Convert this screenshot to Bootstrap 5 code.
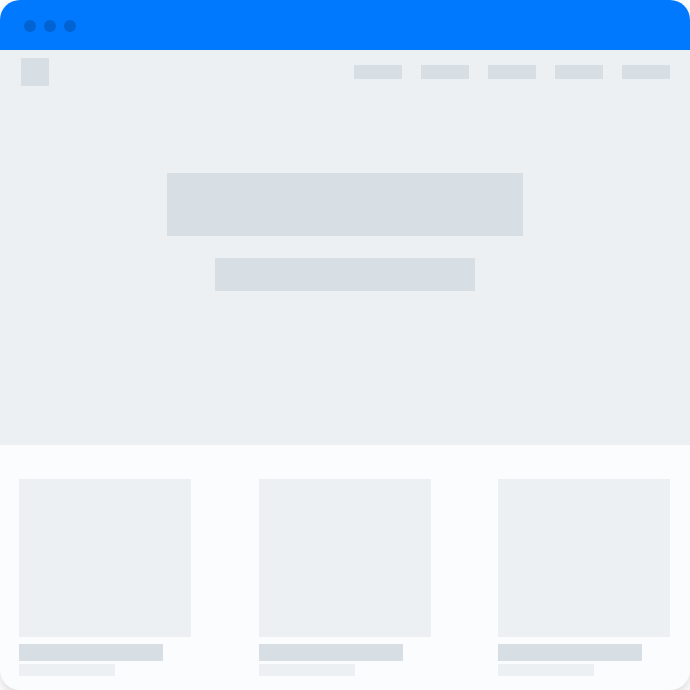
<!DOCTYPE html>
<html lang="en">
<head>
<meta charset="utf-8">
<meta name="viewport" content="width=device-width, initial-scale=1">
<title>Landing page wireframe</title>
<link rel="stylesheet" href="https://cdn.jsdelivr.net/npm/bootstrap@5.3.0/dist/css/bootstrap.min.css">
<style>
  :root { --wf-blue: #0079ff; --wf-dot: #0063d1; --wf-soft: #ecf0f3; --wf-block: #d7dfe5; --wf-page: #fafcfe; }
  body { background: #fff; font-family: "Liberation Sans", sans-serif; }
  .wf-window { min-height: 100vh; border-radius: 20px; background: var(--wf-page); box-shadow: 0 4px 12px rgba(0, 0, 0, .16); }
  .wf-titlebar { height: 50px; padding: 2px 24px 0; background: var(--wf-blue); }
  .wf-dot { width: 12px; height: 12px; background: var(--wf-dot); }
  .wf-soft { background: var(--wf-soft); }
  .wf-block { background: var(--wf-block); }
  .wf-nav { padding: 8px 20px 8px 21px; }
  .wf-logo { width: 28px; height: 28px; }
  .wf-links { gap: 19px; }
  .wf-link { width: 48px; height: 14px; }
  .wf-hero { gap: 22px; padding: 79px 20px 154px; }
  .wf-title { width: 356px; height: 63px; }
  .wf-subtitle { width: 260px; height: 33px; }
  .wf-features { padding: 34px 20px 14px 19px; }
  .wf-feature { width: 172px; }
  .wf-image { height: 158px; margin-bottom: 7px; }
  .wf-heading { width: 144px; height: 17px; margin-bottom: 3px; }
  .wf-text { width: 96px; height: 12px; }
</style>
</head>
<body>
<div class="wf-window overflow-hidden">
  <div class="wf-titlebar d-flex align-items-center gap-2">
    <span class="wf-dot rounded-circle"></span>
    <span class="wf-dot rounded-circle"></span>
    <span class="wf-dot rounded-circle"></span>
  </div>
  <header class="wf-soft">
    <nav class="wf-nav d-flex align-items-center justify-content-between" aria-label="Main">
      <a class="wf-logo wf-block d-block" href="#" aria-label="Home"></a>
      <div class="wf-links d-flex">
        <a class="wf-link wf-block" href="#" aria-label="Link 1"></a>
        <a class="wf-link wf-block" href="#" aria-label="Link 2"></a>
        <a class="wf-link wf-block" href="#" aria-label="Link 3"></a>
        <a class="wf-link wf-block" href="#" aria-label="Link 4"></a>
        <a class="wf-link wf-block" href="#" aria-label="Link 5"></a>
      </div>
    </nav>
    <div class="wf-hero d-flex flex-column align-items-center">
      <div class="wf-title wf-block mw-100"></div>
      <div class="wf-subtitle wf-block mw-100"></div>
    </div>
  </header>
  <main class="wf-features d-flex flex-wrap justify-content-between">
    <div class="wf-feature">
      <div class="wf-image wf-soft"></div>
      <div class="wf-heading wf-block"></div>
      <div class="wf-text wf-soft"></div>
    </div>
    <div class="wf-feature">
      <div class="wf-image wf-soft"></div>
      <div class="wf-heading wf-block"></div>
      <div class="wf-text wf-soft"></div>
    </div>
    <div class="wf-feature">
      <div class="wf-image wf-soft"></div>
      <div class="wf-heading wf-block"></div>
      <div class="wf-text wf-soft"></div>
    </div>
  </main>
</div>
<script src="https://cdn.jsdelivr.net/npm/bootstrap@5.3.0/dist/js/bootstrap.bundle.min.js"></script>
</body>
</html>
